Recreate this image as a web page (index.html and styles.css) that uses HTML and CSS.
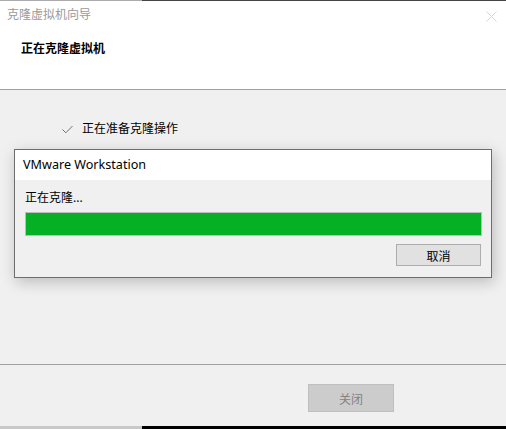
FILE: index.html
```html
<!DOCTYPE html>
<html lang="zh-CN">
<head>
    <meta charset="UTF-8">
    <title>克隆虚拟机向导</title>
    <link rel="stylesheet" href="styles.css">
</head>
<body>
    <div class="wizard">
        <div class="edge-top"></div>
        <div class="header">
            <div class="title-row">
                <span class="title">克隆虚拟机向导</span>
                <svg class="close-x" width="11" height="11" viewBox="0 0 11 11">
                    <path d="M0.5 0.5 L10.5 10.5 M10.5 0.5 L0.5 10.5" stroke="#d6d6d6" stroke-width="1" fill="none"/>
                </svg>
            </div>
            <h1 class="heading">正在克隆虚拟机</h1>
        </div>

        <div class="content">
            <div class="step">
                <svg class="check" width="11" height="9" viewBox="0 0 11 9">
                    <path d="M0.5 4.5 L3.8 7.8 L10.5 1" stroke="#6f6f6f" stroke-width="1" fill="none"/>
                </svg>
                <span>正在准备克隆操作</span>
            </div>

            <div class="dialog">
                <div class="dialog-title">VMware Workstation</div>
                <div class="dialog-body">
                    <div class="status">正在克隆...</div>
                    <div class="progress"><div class="progress-fill" style="width: 100%;"></div></div>
                    <div class="actions">
                        <button class="btn">取消</button>
                    </div>
                </div>
            </div>
        </div>

        <div class="footer">
            <button class="btn btn-disabled" disabled>关闭</button>
        </div>
        <div class="edge-bottom"></div>
    </div>
</body>
</html>
```

FILE: styles.css
```css
body {
    margin: 0;
    padding: 0;
    background: #f0f0f0;
    font-family: "Noto Sans", "Noto Sans CJK SC", sans-serif;
    font-size: 12px;
    color: #000;
}
.wizard {
    width: 506px;
    height: 429px;
    display: flex;
    flex-direction: column;
    overflow: hidden;
}
.edge-top {
    height: 1px;
    background: linear-gradient(to right, #ababab 142px, #444 142px);
}
.edge-bottom {
    height: 3px;
    background: linear-gradient(to right, #c8c8c8 142px, #000 142px);
}
.header {
    height: 88px;
    background: #fff;
    border-bottom: 1px solid #a0a0a0;
}
.title-row {
    display: flex;
    justify-content: space-between;
    align-items: center;
    padding: 6px 9px 0 7px;
    height: 16px;
    line-height: 16px;
}
.title {
    color: #9a9a9a;
}
.close-x {
    margin-top: 3px;
}
.heading {
    margin: 18px 0 0 21px;
    font-size: 12px;
    line-height: 16px;
    font-weight: bold;
}
.content {
    flex: 1;
    padding-top: 31px;
}
.step {
    display: flex;
    align-items: center;
    gap: 9px;
    margin-left: 62px;
    line-height: 16px;
    color: #000;
}
.dialog {
    margin: 12px 0 0 14px;
    width: 476px;
    background: #f0f0f0;
    border: 1px solid #6d6d6d;
    box-shadow: 2px 4px 14px rgba(0, 0, 0, 0.22);
}
.dialog-title {
    height: 30px;
    line-height: 30px;
    padding-left: 8px;
    background: #fff;
    font-size: 12.6px;
}
.dialog-body {
    padding: 10px 9px 11px 10px;
}
.status {
    line-height: 16px;
}
.progress {
    margin-top: 6px;
    height: 22px;
    border: 1px solid #bcbcbc;
    background: #e6e6e6;
}
.progress-fill {
    height: 100%;
    background: #06b025;
}
.actions {
    display: flex;
    justify-content: flex-end;
    margin-top: 8px;
    padding-right: 1px;
}
.btn {
    width: 85px;
    height: 22px;
    padding: 0;
    font-family: "Noto Sans CJK SC", sans-serif;
    font-size: 12px;
    color: #000;
    background: #e1e1e1;
    border: 1px solid #adadad;
    border-radius: 0;
}
.footer {
    height: 61px;
    border-top: 1px solid #a0a0a0;
    display: flex;
    justify-content: flex-end;
    align-items: flex-start;
    padding-right: 112px;
}
.btn-disabled {
    width: 86px;
    height: 28px;
    margin-top: 19px;
    color: #838383;
    background: #cccccc;
    border-color: #bfbfbf;
}
```
